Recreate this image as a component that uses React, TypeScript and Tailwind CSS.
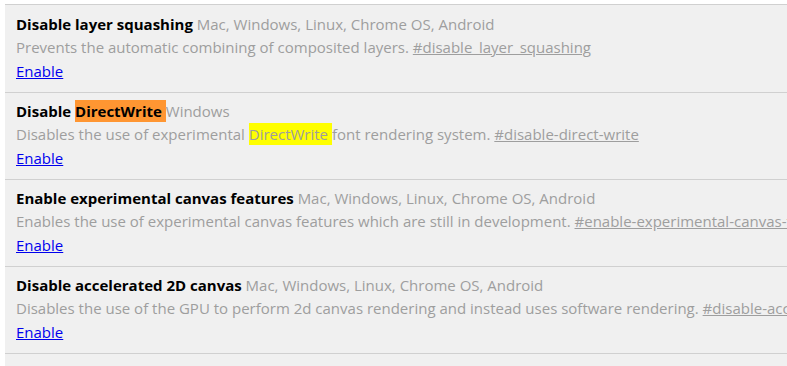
import React from "react";

type Item = {
  title: React.ReactNode;
  platforms: string;
  desc: React.ReactNode;
  anchor: string;
};

const items: Item[] = [
  {
    title: "Disable layer squashing ",
    platforms: "Mac, Windows, Linux, Chrome OS, Android",
    desc: "Prevents the automatic combining of composited layers. ",
    anchor: "#disable_layer_squashing",
  },
  {
    title: (
      <>
        Disable <span className="bg-[#ff9632] py-[1px]">DirectWrite </span>
      </>
    ),
    platforms: "Windows",
    desc: (
      <>
        Disables the use of experimental <span className="bg-[#ffff00] py-[1px]">DirectWrite </span>font rendering system.{" "}
      </>
    ),
    anchor: "#disable-direct-write",
  },
  {
    title: "Enable experimental canvas features ",
    platforms: "Mac, Windows, Linux, Chrome OS, Android",
    desc: "Enables the use of experimental canvas features which are still in development. ",
    anchor: "#enable-experimental-canvas-features",
  },
  {
    title: "Disable accelerated 2D canvas ",
    platforms: "Mac, Windows, Linux, Chrome OS, Android",
    desc: "Disables the use of the GPU to perform 2d canvas rendering and instead uses software rendering. ",
    anchor: "#disable-accelerated-2d-canvas",
  },
];

export default function App() {
  return (
    <div
      className="w-[787px] h-[366px] overflow-hidden bg-white pt-[4px] pl-[5px] text-[15px] leading-[23px]"
      style={{ fontFamily: '"Open Sans", "Noto Sans", sans-serif' }}
    >
      <div className="bg-[#f0f0f0] h-full border-t border-[#d0d0d0]">
        {items.map((it, i) => (
          <div
            key={i}
            className={`pl-[11px] pb-[9px] whitespace-nowrap overflow-hidden ${i > 0 ? "pt-[7px] border-t border-[#d0d0d0]" : "pt-[8px]"}`}
          >
            <div>
              <span className="font-bold text-black">{it.title}</span>
              <span className="text-[#9e9e9e]">{it.platforms}</span>
            </div>
            <div className="text-[#9e9e9e]">
              {it.desc}
              <span className="underline">{it.anchor}</span>
            </div>
            <div className="mt-[1px]">
              <a className="text-[#0000ee] underline">Enable</a>
            </div>
          </div>
        ))}
        <div className="border-t border-[#d0d0d0]" />
      </div>
    </div>
  );
}
